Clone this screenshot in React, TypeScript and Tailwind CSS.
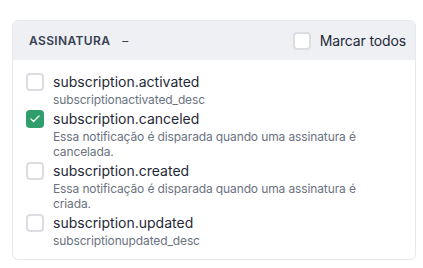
import { Check } from "lucide-react";

type Event = {
  name: string;
  desc: string;
  checked?: boolean;
};

const events: Event[] = [
  { name: "subscription.activated", desc: "subscriptionactivated_desc" },
  {
    name: "subscription.canceled",
    desc: "Essa notificação é disparada quando uma assinatura é cancelada.",
    checked: true,
  },
  {
    name: "subscription.created",
    desc: "Essa notificação é disparada quando uma assinatura é criada.",
  },
  { name: "subscription.updated", desc: "subscriptionupdated_desc" },
];

function Box({ checked }: { checked?: boolean }) {
  if (checked) {
    return (
      <span className="flex h-[18px] w-[18px] shrink-0 items-center justify-center rounded-[4px] bg-[#2f9e6b]">
        <Check className="h-3 w-3 text-white" strokeWidth={2.5} />
      </span>
    );
  }
  return (
    <span className="block h-[18px] w-[18px] shrink-0 rounded-[4px] border-2 border-[#dcdde3] bg-white" />
  );
}

export default function App() {
  return (
    <div className="bg-white pt-5 pr-[7px] pb-[9px] pl-3 font-['Inter',sans-serif]">
      <div className="overflow-hidden rounded-md border border-[#e6e8ec]">
        {/* header */}
        <div className="flex h-[39px] items-center justify-between bg-[#eef0f4] pl-4 pr-[9px]">
          <div className="flex items-center gap-[12px] text-[12px] font-semibold tracking-[0.03em] text-[#374151]">
            <span>ASSINATURA</span>
            <span className="font-normal">–</span>
          </div>
          <label className="flex items-center gap-[9px] text-[14px] tracking-[-0.01em] text-[#1f2937]">
            <Box />
            Marcar todos
          </label>
        </div>

        {/* events */}
        <div className="flex flex-col gap-[2px] px-[13px] pt-3 pb-[11px]">
          {events.map((e) => (
            <div key={e.name} className="flex items-start gap-[9px]">
              <div className="pt-[1px]">
                <Box checked={e.checked} />
              </div>
              <div className="flex flex-col">
                <span className="text-[14px] leading-[20px] text-[#1f2937]">{e.name}</span>
                <span className="max-w-[318px] text-[12px] leading-[15px] tracking-[-0.01em] text-[#6b7280]">
                  {e.desc}
                </span>
              </div>
            </div>
          ))}
        </div>
      </div>
    </div>
  );
}
